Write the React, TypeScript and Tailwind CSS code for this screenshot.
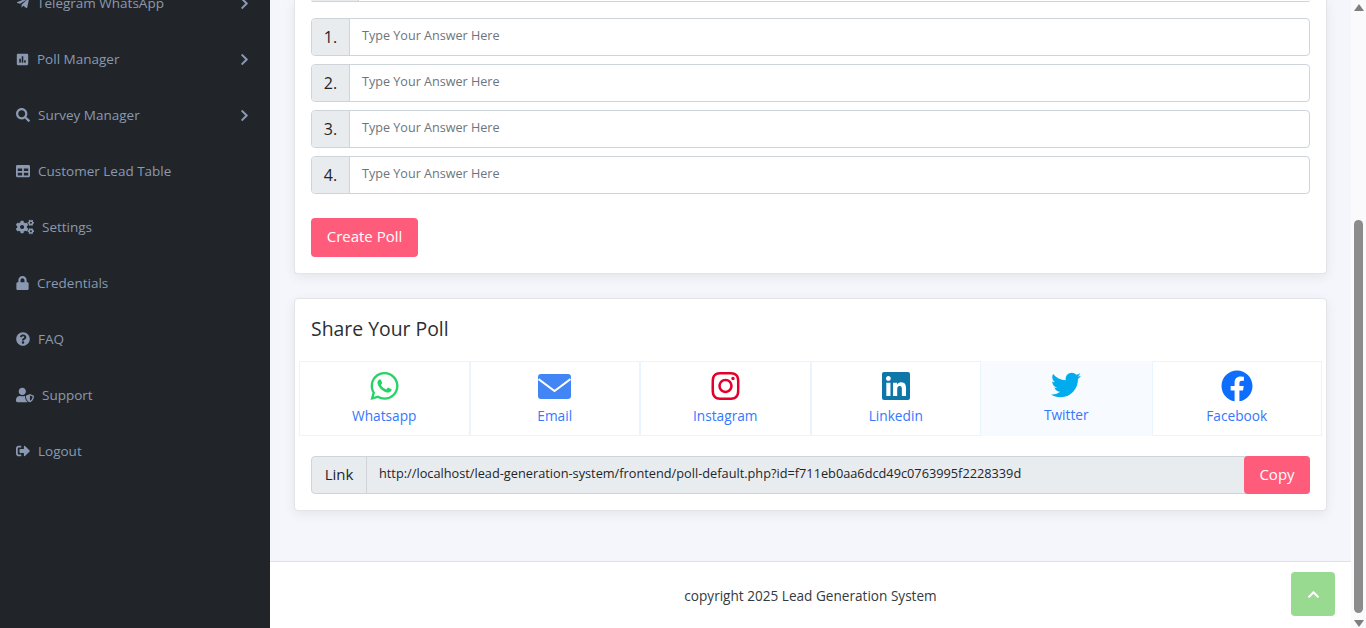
import type { ReactNode } from 'react'
import {
  FaChevronRight,
  FaChevronUp,
  FaCogs,
  FaFacebook,
  FaInstagram,
  FaLinkedin,
  FaLock,
  FaPoll,
  FaQuestionCircle,
  FaSearch,
  FaSignOutAlt,
  FaTable,
  FaTelegramPlane,
  FaTwitter,
  FaUserShield,
  FaWhatsapp,
} from 'react-icons/fa'

const font = '[font-family:"Open_Sans","Noto_Sans",sans-serif]'

const menu: { label: string; icon: ReactNode; gap: string; arrow?: boolean }[] = [
  { label: 'Telegram WhatsApp', icon: <FaTelegramPlane className="h-[14px] w-[14px]" />, gap: 'gap-[7px]', arrow: true },
  { label: 'Poll Manager', icon: <FaPoll className="h-[13px] w-[13px]" />, gap: 'gap-[8px]', arrow: true },
  { label: 'Survey Manager', icon: <FaSearch className="h-[14px] w-[14px]" />, gap: 'gap-[8px]', arrow: true },
  { label: 'Customer Lead Table', icon: <FaTable className="h-[14px] w-[14px]" />, gap: 'gap-[8px]' },
  { label: 'Settings', icon: <FaCogs className="h-[18px] w-[18px]" />, gap: 'gap-[8px]' },
  { label: 'Credentials', icon: <FaLock className="h-[14px] w-[13px]" />, gap: 'gap-[8px]' },
  { label: 'FAQ', icon: <FaQuestionCircle className="h-[14px] w-[14px]" />, gap: 'gap-[8px]' },
  { label: 'Support', icon: <FaUserShield className="h-[18px] w-[18px]" />, gap: 'gap-[8px]' },
  { label: 'Logout', icon: <FaSignOutAlt className="h-[14px] w-[14px]" />, gap: 'gap-[8px]' },
]

function EmailIcon() {
  return (
    <svg viewBox="0 0 33 25" className="h-[25px] w-[33px]">
      <rect width="33" height="25" rx="3" fill="#4285f4" />
      <path d="M0.5 5 16.5 17 32.5 5" fill="none" stroke="#fff" strokeWidth="2" />
    </svg>
  )
}

const shares: { label: string; icon: ReactNode; active?: boolean }[] = [
  { label: 'Whatsapp', icon: <FaWhatsapp className="h-[32px] w-[29px] text-[#25d366]" /> },
  { label: 'Email', icon: <EmailIcon /> },
  { label: 'Instagram', icon: <FaInstagram className="h-[32px] w-[29px] text-[#e4002b]" /> },
  { label: 'Linkedin', icon: <FaLinkedin className="h-[32px] w-[32px] text-[#0e76a8]" /> },
  { label: 'Twitter', icon: <FaTwitter className="h-[30px] w-[32px] text-[#00acee]" />, active: true },
  { label: 'Facebook', icon: <FaFacebook className="h-[32px] w-[32px] text-[#0d6efd]" /> },
]

function AnswerRow({ n }: { n: number }) {
  return (
    <div className="flex h-[38px] rounded-[4px] border border-[#ced4da] bg-white">
      <span className="flex w-[38px] items-center justify-center rounded-l-[4px] border-r border-[#ced4da] bg-[#e9ecef] pb-[1px] text-base text-[#212529]">
        {n}.
      </span>
      <span className="flex items-center pb-[2px] pl-[12px] text-[12.6px] text-[#6c757d]">Type Your Answer Here</span>
    </div>
  )
}

export default function App() {
  return (
    <div className={`flex h-[628px] w-[1366px] overflow-hidden bg-[#f5f6fb] ${font}`}>
      <aside className="w-[270px] shrink-0 overflow-hidden bg-[#212529] pl-[16px] pr-[19px] text-[13.5px] text-[#8a99b1]">
        <ul className="mt-[-25px]">
          {menu.map((item) => (
            <li key={item.label} className="flex h-[56px] items-center justify-between">
              <span className={`flex items-center ${item.gap}`}>
                {item.icon}
                {item.label}
              </span>
              {item.arrow && <FaChevronRight className="h-[13px] w-[13px]" />}
            </li>
          ))}
        </ul>
      </aside>

      <div className="flex w-[1081px] shrink-0 flex-col">
        <main className="flex flex-1 flex-col gap-[24px] px-[24px]">
          <section className="h-[274px] rounded-b-[4px] border border-t-0 border-[#e2e4e8] bg-white px-[16px] shadow-[0_3px_12px_rgba(0,0,0,0.07)]">
            <div className="flex h-[2px] rounded-b-[4px] border-b border-[#ced4da]">
              <span className="w-[48px] border-r border-[#ced4da] bg-[#e9ecef]" />
            </div>
            <div className="mt-[16px] flex flex-col gap-[8px]">
              {[1, 2, 3, 4].map((n) => (
                <AnswerRow key={n} n={n} />
              ))}
            </div>
            <button className="mt-[24px] h-[39px] w-[107px] rounded-[4px] bg-[#ff5c7c] pb-[3px] text-[15px] text-white">
              Create Poll
            </button>
          </section>

          <section className="h-[213px] rounded-[4px] border border-[#e2e4e8] bg-white shadow-[0_3px_12px_rgba(0,0,0,0.07)]">
            <h2 className="pl-[16px] pt-[16px] text-[19.4px] leading-[27px] text-[#2b2f33]">Share Your Poll</h2>
            <div className="mx-[4px] mt-[19px] grid h-[75px] grid-cols-6">
              {shares.map((s) => (
                <div
                  key={s.label}
                  className={`flex flex-col items-center border border-[#eaf4fd] text-[13.7px] text-[#3377ff] ${
                    s.active ? 'border-transparent bg-[#f7fbff] pt-[7px]' : 'pt-[8px]'
                  }`}
                >
                  <span className="flex h-[32px] items-center">{s.icon}</span>
                  <span className="mt-[3px] leading-[21px]">{s.label}</span>
                </div>
              ))}
            </div>
            <div className="mx-[16px] mt-[20px] flex h-[38px] rounded-[4px] border border-[#ced4da] bg-[#e9ecef]">
              <span className="flex w-[55px] items-center justify-center border-r border-[#ced4da] pb-[2px] text-[15px] text-[#212529]">
                Link
              </span>
              <span className="flex flex-1 items-center pb-[2px] pl-[12px] text-[12.75px] text-[#212529]">
                http://localhost/lead-generation-system/frontend/poll-default.php?id=f711eb0aa6dcd49c0763995f2228339d
              </span>
              <button className="my-[-1px] mr-[-1px] w-[66px] rounded-[4px] bg-[#ff5c7c] pb-[2px] text-[15px] text-white">
                Copy
              </button>
            </div>
          </section>
        </main>

        <footer className="relative flex h-[67px] items-center justify-center border-t border-[#dee2e6] bg-white pt-[2px] text-[13.6px] text-[#343a40]">
          copyright 2025 Lead Generation System
          <span className="absolute left-[1021px] top-[10px] flex h-[44px] w-[44px] items-center justify-center rounded-[4px] bg-[#98da8f] text-white">
            <FaChevronUp className="h-[13px] w-[13px]" />
          </span>
        </footer>
      </div>

      <div className="flex w-[15px] shrink-0 flex-col items-center justify-between bg-[#fafafc] pt-[4px]">
        <span className="h-0 w-0 border-x-[5px] border-b-[7px] border-x-transparent border-b-[#7f7f7f]" />
        <div className="flex flex-1 flex-col items-center justify-end">
          <span className="h-[393px] w-[9px] rounded-[5px] bg-[#8c8c8c]" />
          <span className="mb-[1px] mt-[7px] h-0 w-0 border-x-[5px] border-t-[7px] border-x-transparent border-t-[#7f7f7f]" />
        </div>
      </div>
    </div>
  )
}
